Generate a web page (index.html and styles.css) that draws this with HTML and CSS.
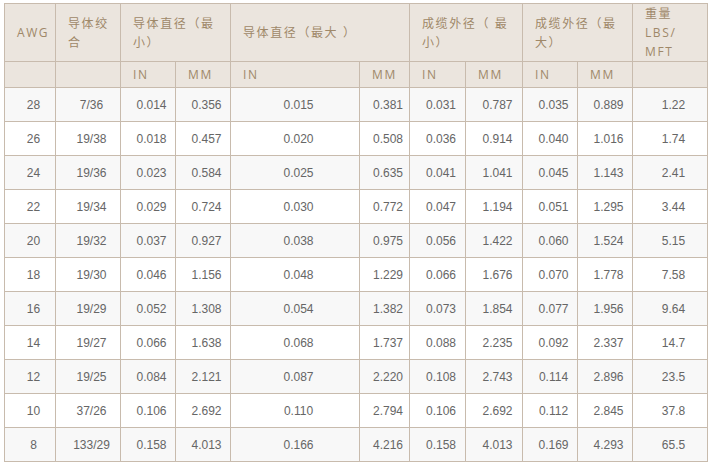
FILE: index.html
```html
<!DOCTYPE html>
<html lang="zh">
<head>
<meta charset="utf-8">
<link rel="stylesheet" href="styles.css">
</head>
<body>
<div class="wrap">
<table class="spec">
  <colgroup>
    <col class="c51"><col class="c65"><col class="c55"><col class="c55"><col class="c129"><col class="c50"><col class="c56"><col class="c57"><col class="c55"><col class="c55"><col class="c75">
  </colgroup>
  <thead>
    <tr class="h1">
      <th>AWG</th>
      <th>导体绞合</th>
      <th colspan="2">导体直径（最小）</th>
      <th colspan="2">导体直径（最大 ）</th>
      <th colspan="2">成缆外径（ 最小）</th>
      <th colspan="2">成缆外径（最大）</th>
      <th>重量 LBS/ MFT</th>
    </tr>
    <tr class="h2">
      <th></th><th></th>
      <th>IN</th><th>MM</th>
      <th>IN</th><th>MM</th>
      <th>IN</th><th>MM</th>
      <th>IN</th><th>MM</th>
      <th></th>
    </tr>
  </thead>
  <tbody>
    <tr><td>28</td><td>7/36</td><td>0.014</td><td>0.356</td><td>0.015</td><td>0.381</td><td>0.031</td><td>0.787</td><td>0.035</td><td>0.889</td><td>1.22</td></tr>
    <tr><td>26</td><td>19/38</td><td>0.018</td><td>0.457</td><td>0.020</td><td>0.508</td><td>0.036</td><td>0.914</td><td>0.040</td><td>1.016</td><td>1.74</td></tr>
    <tr><td>24</td><td>19/36</td><td>0.023</td><td>0.584</td><td>0.025</td><td>0.635</td><td>0.041</td><td>1.041</td><td>0.045</td><td>1.143</td><td>2.41</td></tr>
    <tr><td>22</td><td>19/34</td><td>0.029</td><td>0.724</td><td>0.030</td><td>0.772</td><td>0.047</td><td>1.194</td><td>0.051</td><td>1.295</td><td>3.44</td></tr>
    <tr><td>20</td><td>19/32</td><td>0.037</td><td>0.927</td><td>0.038</td><td>0.975</td><td>0.056</td><td>1.422</td><td>0.060</td><td>1.524</td><td>5.15</td></tr>
    <tr><td>18</td><td>19/30</td><td>0.046</td><td>1.156</td><td>0.048</td><td>1.229</td><td>0.066</td><td>1.676</td><td>0.070</td><td>1.778</td><td>7.58</td></tr>
    <tr><td>16</td><td>19/29</td><td>0.052</td><td>1.308</td><td>0.054</td><td>1.382</td><td>0.073</td><td>1.854</td><td>0.077</td><td>1.956</td><td>9.64</td></tr>
    <tr><td>14</td><td>19/27</td><td>0.066</td><td>1.638</td><td>0.068</td><td>1.737</td><td>0.088</td><td>2.235</td><td>0.092</td><td>2.337</td><td>14.7</td></tr>
    <tr><td>12</td><td>19/25</td><td>0.084</td><td>2.121</td><td>0.087</td><td>2.220</td><td>0.108</td><td>2.743</td><td>0.114</td><td>2.896</td><td>23.5</td></tr>
    <tr><td>10</td><td>37/26</td><td>0.106</td><td>2.692</td><td>0.110</td><td>2.794</td><td>0.106</td><td>2.692</td><td>0.112</td><td>2.845</td><td>37.8</td></tr>
    <tr><td>8</td><td>133/29</td><td>0.158</td><td>4.013</td><td>0.166</td><td>4.216</td><td>0.158</td><td>4.013</td><td>0.169</td><td>4.293</td><td>65.5</td></tr>
  </tbody>
</table>
</div>
</body>
</html>
```
FILE: styles.css
```css
html, body {
  margin: 0;
  padding: 0;
  background: #ffffff;
}
.wrap {
  padding: 3px 0 0 4px;
}
.spec {
  border-collapse: collapse;
  table-layout: fixed;
  width: 704px;
  border: 1px solid #c8bbad;
}
.c51 { width: 51px; }
.c65 { width: 65px; }
.c55 { width: 55px; }
.c129 { width: 129px; }
.c50 { width: 50px; }
.c56 { width: 56px; }
.c57 { width: 57px; }
.c75 { width: 75px; }
.spec th, .spec td {
  border: 1px solid #c8bbad;
  padding: 0 5px 0 12px;
}
.spec th {
  background: #ebe5de;
  color: #9f8869;
  font-family: "Open Sans", "Noto Sans CJK SC", sans-serif;
  font-size: 12px;
  font-weight: normal;
  letter-spacing: 1.6px;
  text-align: left;
  line-height: 19px;
  vertical-align: middle;
}
.h1 th { height: 57px; }
.h2 th { height: 25px; }
.spec td {
  height: 33px;
  font-family: "Liberation Sans", Arial, sans-serif;
  font-size: 12px;
  color: #666666;
  text-align: center;
  vertical-align: middle;
}
.spec tbody tr:nth-child(odd) td {
  background: #f8f8f8;
}
.spec tbody tr:nth-child(even) td {
  background: #ffffff;
}
```
